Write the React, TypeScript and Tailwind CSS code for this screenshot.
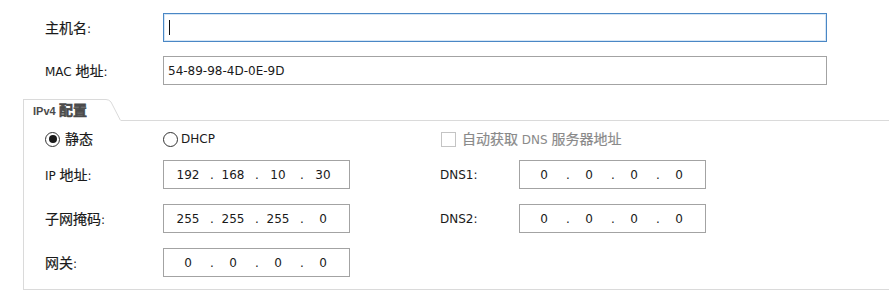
import React from "react";

const Z = ({ children }: { children: React.ReactNode }) => (
  <span className="text-[14px] [-webkit-text-stroke:0.2px]">{children}</span>
);

const IpField = ({ parts }: { parts: string[] }) => (
  <div className="flex h-[29px] w-[187px] items-center border border-[#a3a3a3] bg-white pl-[6px]">
    {parts.map((p, i) => (
      <React.Fragment key={i}>
        <div className="w-[36px] text-center leading-none">{p}</div>
        {i < parts.length - 1 && (
          <div className="w-[9px] pl-[3px] text-center leading-none">.</div>
        )}
      </React.Fragment>
    ))}
  </div>
);

const Radio = ({ checked }: { checked?: boolean }) => (
  <span className="flex h-[15px] w-[15px] items-center justify-center rounded-full border border-[#333333] bg-white">
    {checked && <span className="h-[8px] w-[8px] rounded-full bg-[#1a1a1a]" />}
  </span>
);

export default function App() {
  return (
    <div
      className="h-[293px] w-[889px] overflow-hidden bg-white text-[12px] text-[#1a1a1a]"
      style={{ fontFamily: '"DejaVu Sans", "Noto Sans CJK SC", sans-serif' }}
    >
      <div className="flex flex-col gap-[14px] pt-[13px]">
        <div className="flex items-center pl-[45px]">
          <div className="w-[118px] leading-none">
            <Z>主机名</Z>:
          </div>
          <div className="flex h-[29px] w-[664px] items-center border border-[#4a87c5] bg-white pl-[5px] shadow-[inset_0_0_0_1px_#d6e6f5]">
            <span className="h-[15px] w-px bg-[#111]" />
          </div>
        </div>
        <div className="flex items-center pl-[45px]">
          <div className="w-[118px] leading-none">
            MAC <Z>地址</Z>:
          </div>
          <div className="flex h-[29px] w-[664px] items-center border border-[#a3a3a3] bg-white pl-[4px] leading-none">
            54-89-98-4D-0E-9D
          </div>
        </div>
      </div>

      <div className="ml-[23px] mt-[14px] w-[866px] border-b border-l border-[#dadada]">
        <div className="flex h-[22px]">
          <div className="relative flex w-[97px] items-start pl-[9px] pt-[3px]">
            <svg
              className="absolute left-0 top-0"
              width="97"
              height="22"
              viewBox="0 0 97 22"
            >
              <path
                d="M0 0.5 H82 Q85 0.5 87 3 L96.5 21.5"
                fill="none"
                stroke="#dadada"
                strokeWidth="1"
              />
            </svg>
            <span
              className="relative font-bold leading-[16px] text-[#4a4a4a]"
              style={{ fontFamily: '"Liberation Sans", "Noto Sans CJK SC", sans-serif' }}
            >
              <span className="text-[11px]">IPv4</span>{" "}
              <span className="text-[14px] [-webkit-text-stroke:0.6px]">配置</span>
            </span>
          </div>
          <div className="flex-1 border-b border-[#dadada]" />
        </div>

        <div className="flex flex-col pb-[12px] pl-[21px] pt-[8px]">
          <div className="flex h-[20px] items-center">
            <div className="flex w-[118px] items-center gap-[5px]">
              <Radio checked />
              <Z>静态</Z>
            </div>
            <div className="flex w-[277px] items-center gap-[3px]">
              <Radio />
              <span>DHCP</span>
            </div>
            <div className="flex items-center gap-[6px] pl-px text-[#8a8a8a]">
              <span className="h-[15px] w-[15px] border border-[#c4c4c4] bg-white" />
              <span>
                <Z>自动获取</Z> DNS <Z>服务器地址</Z>
              </span>
            </div>
          </div>

          <div className="mt-[11px] flex flex-col gap-[15px]">
            <div className="flex items-center">
              <div className="w-[118px] leading-none">
                IP <Z>地址</Z>:
              </div>
              <IpField parts={["192", "168", "10", "30"]} />
              <div className="w-[90px]" />
              <div className="w-[79px] leading-none">DNS1:</div>
              <IpField parts={["0", "0", "0", "0"]} />
            </div>
            <div className="flex items-center">
              <div className="w-[118px] leading-none">
                <Z>子网掩码</Z>:
              </div>
              <IpField parts={["255", "255", "255", "0"]} />
              <div className="w-[90px]" />
              <div className="w-[79px] leading-none">DNS2:</div>
              <IpField parts={["0", "0", "0", "0"]} />
            </div>
            <div className="flex items-center">
              <div className="w-[118px] leading-none">
                <Z>网关</Z>:
              </div>
              <IpField parts={["0", "0", "0", "0"]} />
            </div>
          </div>
        </div>
      </div>
    </div>
  );
}
